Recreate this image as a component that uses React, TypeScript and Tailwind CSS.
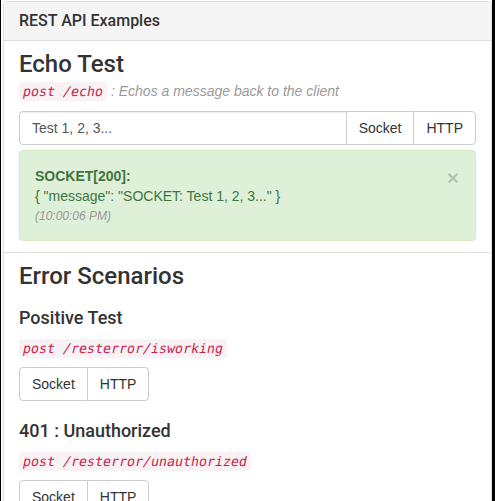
const sans = { fontFamily: '"Liberation Sans", Arial, sans-serif' }
const head = { fontFamily: 'Roboto, "Liberation Sans", Arial, sans-serif' }

function Code({ children }: { children: string }) {
  return (
    <code className="rounded-[4px] bg-[#f9f2f4] px-1 py-0.5 font-['DejaVu_Sans_Mono',monospace] text-[13.3px] leading-[15px] text-[#c7254e]">
      {/* the mono face has no italic here, so lean it */}
      <span className="inline-block -skew-x-[11deg]">{children}</span>
    </code>
  )
}

function BtnGroup() {
  return (
    <div className="inline-flex h-[34px]">
      <button className="h-full rounded-l-[4px] border border-[#ccc] bg-white px-3 text-sm text-[#333]">Socket</button>
      <button className="-ml-px h-full rounded-r-[4px] border border-[#ccc] bg-white px-3 text-sm text-[#333]">HTTP</button>
    </div>
  )
}

function Scenario({ title, route }: { title: string, route: string }) {
  return (
    <div className="mt-[20px]">
      <h4 style={head} className="text-[18px] leading-[1.1] font-medium text-[#333]">{title}</h4>
      <p className="mt-[10px] mb-[9px] h-5 leading-5">
        <Code>{route}</Code>
      </p>
      <BtnGroup />
    </div>
  )
}

export default function App() {
  return (
    <div style={sans} className="h-[501px] w-[495px] overflow-hidden border-l border-r-[3px] border-black bg-white text-sm text-[#333]">
      <div className="mt-px ml-[2px] h-[600px] rounded-t-[4px] border border-[#ddd]">
        {/* panel heading */}
        <div className="rounded-t-[3px] border-b border-[#ddd] bg-[#f5f5f5] px-[15px] py-[10px]">
          <h3 style={head} className="text-base leading-[1.1] font-medium">REST API Examples</h3>
        </div>

        {/* echo test */}
        <div className="px-[15px] pt-[10px] pb-[11px]">
          <h3 style={head} className="text-2xl leading-[1.1] font-medium">Echo Test</h3>
          <p className="mt-[4px] mb-[10px] h-5 leading-5">
            <Code>post /echo</Code> <em className="text-[#999]">: Echos a message back to the client</em>
          </p>
          <div className="flex h-[34px]">
            <input
              defaultValue="Test 1, 2, 3..."
              className="h-full min-w-0 flex-1 rounded-l-[4px] border border-[#ccc] px-3 text-sm text-[#555] shadow-[inset_0_1px_1px_rgba(0,0,0,0.075)] outline-none"
            />
            <button className="-ml-px h-full border border-[#ccc] bg-white px-3 text-sm">Socket</button>
            <button className="-ml-px h-full rounded-r-[4px] border border-[#ccc] bg-white px-3 text-sm">HTTP</button>
          </div>
          <div className="relative mt-[5px] rounded-[4px] border border-[#d6e9c6] bg-[#dff0d8] p-[15px] pb-[14px] leading-5 text-[#3c763d]">
            {/* close button */}
            <span className="absolute top-[16px] right-[16px] text-[21px] leading-none font-bold text-black/20">×</span>
            <div className="font-bold">SOCKET[200]:</div>
            <div>{'{ "message": "SOCKET: Test 1, 2, 3..." }'}</div>
            <div className="text-[12px] text-[#999] italic">(10:00:06 PM)</div>
          </div>
        </div>

        {/* error scenarios */}
        <div className="border-t border-[#ddd] px-[15px] pt-[10px]">
          <h3 style={head} className="-mb-px text-2xl leading-[1.1] font-medium">Error Scenarios</h3>
          <Scenario title="Positive Test" route="post /resterror/isworking" />
          <Scenario title="401 : Unauthorized" route="post /resterror/unauthorized" />
        </div>
      </div>
    </div>
  )
}
